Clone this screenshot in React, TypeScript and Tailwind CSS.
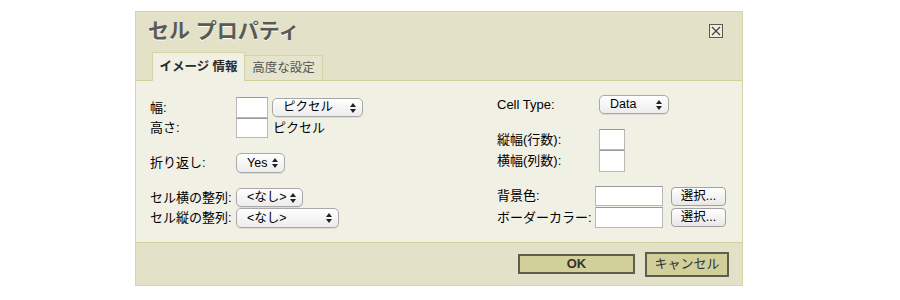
import React from "react";

const font = { fontFamily: '"Liberation Sans", "Noto Sans CJK JP", sans-serif' };

function Arrows() {
  return (
    <svg width="6" height="10" viewBox="0 0 6 10" className="shrink-0">
      <path d="M3 0 L6 4 L0 4 Z" fill="#222" />
      <path d="M3 10 L6 6 L0 6 Z" fill="#222" />
    </svg>
  );
}

function Select({ w, label, h = "h-[19px]" }: { w: string; label: string; h?: string }) {
  return (
    <div
      className={`${w} ${h} flex items-center justify-between pl-[10px] pr-[6px] rounded-[5px] border border-[#a8a8a8] bg-gradient-to-b from-white to-[#ececec] text-[12.5px] text-black shadow-[0_1px_0_rgba(0,0,0,0.08)]`}
    >
      <span className="leading-none">{label}</span>
      <Arrows />
    </div>
  );
}

function Input({ w, h }: { w: string; h: string }) {
  return <div className={`${w} ${h} bg-white border border-[#b8b8b8] border-t-[#9a9a9a]`} />;
}

function PickBtn() {
  return (
    <div className="w-[55px] h-[19px] flex items-center justify-center rounded-[4px] border border-[#a0a0a0] bg-gradient-to-b from-white to-[#e8e8e8] text-[12.5px] text-black">
      選択...
    </div>
  );
}

export default function App() {
  return (
    <div className="w-[900px] h-[300px] bg-white" style={font}>
      <div className="pt-[11px] pl-[135px]">
        <div className="w-[608px] h-[275px] border border-[#d7d5a6] flex flex-col">
          {/* Header */}
          <div className="h-[69px] bg-[#e3e1c8] border-b border-[#d2d09a] flex flex-col">
            <div className="flex justify-between items-start">
              <div className="pl-[12px] pt-[6px] text-[21px] font-bold text-[#5a5a52] leading-[26px] [text-shadow:0_1px_0_#fff]">
                セル プロパティ
              </div>
              <div className="mt-[12px] mr-[19px] w-[14px] h-[14px] border-[1.5px] border-[#5a5a50] bg-[#eeeede] flex items-center justify-center">
                <svg width="10" height="10" viewBox="0 0 10 10">
                  <path d="M1 1 L9 9 M9 1 L1 9" stroke="#4a4a40" strokeWidth="1.4" />
                </svg>
              </div>
            </div>
            <div className="mt-auto flex items-end pl-[16px] -mb-px">
              <div className="w-[93px] h-[29px] bg-[#f1f0e5] border border-b-0 border-[#d6d4a2] flex items-center justify-center text-[12.5px] font-bold text-[#2a2a2a]">
                イメージ 情報
              </div>
              <div className="w-[78px] h-[26px] bg-[#e6e4cc] border border-l-0 border-b-[#d2d09a] border-[#d6d4a2] flex items-center justify-center text-[12.5px] text-[#555]">
                高度な設定
              </div>
            </div>
          </div>

          {/* Content */}
          <div className="h-[161px] bg-[#f1f0e5] flex text-[13px] text-black">
            {/* Left column */}
            <div className="w-[346px] pl-[14px] pt-[16px] flex flex-col">
              <div className="flex items-center h-[21px]">
                <span className="w-[86px]">幅:</span>
                <Input w="w-[32px]" h="h-[21px]" />
                <div className="ml-[4px]">
                  <Select w="w-[91px]" label="ピクセル" />
                </div>
              </div>
              <div className="flex items-center h-[20px]">
                <span className="w-[86px]">高さ:</span>
                <Input w="w-[32px]" h="h-[20px]" />
                <span className="ml-[5px]">ピクセル</span>
              </div>
              <div className="flex items-center h-[20px] mt-[15px]">
                <span className="w-[86px]">折り返し:</span>
                <Select w="w-[49px]" label="Yes" h="h-[20px]" />
              </div>
              <div className="flex items-center h-[19px] mt-[15px]">
                <span className="w-[86px]">セル横の整列:</span>
                <Select w="w-[67px]" label="<なし>" />
              </div>
              <div className="flex items-center h-[20px] mt-[1px]">
                <span className="w-[86px]">セル縦の整列:</span>
                <Select w="w-[103px]" label="<なし>" h="h-[20px]" />
              </div>
            </div>
            {/* Right column */}
            <div className="pl-[15px] pt-[14px] flex flex-col">
              <div className="flex items-center h-[19px]">
                <span className="w-[102px]">Cell Type:</span>
                <Select w="w-[70px]" label="Data" />
              </div>
              <div className="flex items-center h-[21px] mt-[15px]">
                <span className="w-[102px]">縦幅(行数):</span>
                <Input w="w-[26px]" h="h-[21px]" />
              </div>
              <div className="flex items-center h-[22px]">
                <span className="w-[102px]">横幅(列数):</span>
                <Input w="w-[26px]" h="h-[22px]" />
              </div>
              <div className="flex items-center h-[20px] mt-[14px]">
                <span className="w-[98px]">背景色:</span>
                <Input w="w-[68px]" h="h-[20px]" />
                <div className="ml-[8px]">
                  <PickBtn />
                </div>
              </div>
              <div className="flex items-center h-[21px] mt-[1px]">
                <span className="w-[98px]">ボーダーカラー:</span>
                <Input w="w-[68px]" h="h-[21px]" />
                <div className="ml-[8px]">
                  <PickBtn />
                </div>
              </div>
            </div>
          </div>

          {/* Footer */}
          <div className="flex-1 bg-[#e3e1c8] border-t border-[#d2d09a] flex items-center justify-end pr-[13px] gap-[10px]">
            <div className="w-[117px] h-[20px] bg-[#d1cf9a] border-2 border-[#5e5d4e] flex items-center justify-center text-[13px] font-bold text-[#333]">
              OK
            </div>
            <div className="w-[84px] h-[25px] bg-[#d1cf9a] border-2 border-[#5e5d4e] flex items-center justify-center text-[13px] text-[#333]">
              キャンセル
            </div>
          </div>
        </div>
      </div>
    </div>
  );
}
